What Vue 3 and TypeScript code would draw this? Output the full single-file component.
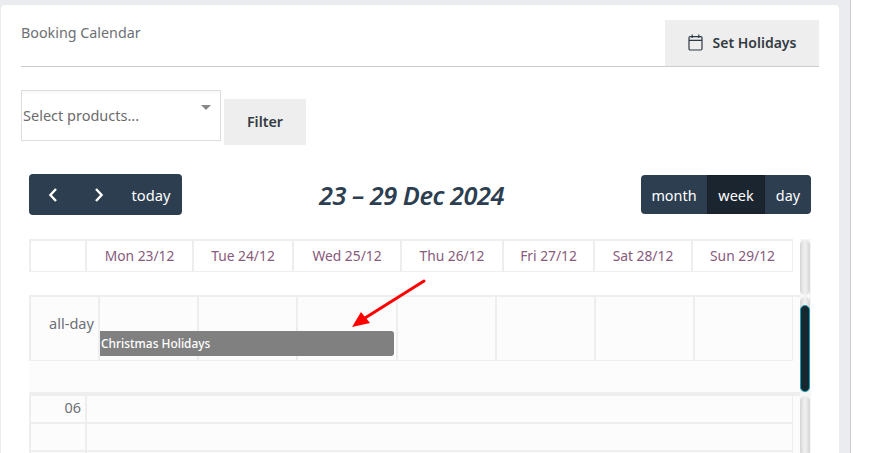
<script setup lang="ts">
const headDays = ['Mon 23/12', 'Tue 24/12', 'Wed 25/12', 'Thu 26/12', 'Fri 27/12', 'Sat 28/12', 'Sun 29/12']
const allDayCells = [1, 2, 3, 4, 5, 6, 7]
const times = ['06', '', '']
</script>

<template>
  <div class="page">
    <div class="shell">
      <main class="card">
        <header class="card-head">
          <h1 class="card-title">Booking Calendar</h1>
          <button class="btn holidays" type="button">
            <svg class="cal-icon" width="15" height="17" viewBox="0 0 15 17" fill="none" stroke="#2f3a44" stroke-width="1.2">
              <rect x="1" y="2.6" width="13" height="13.4" rx="1.2" />
              <path d="M1 6.4h13M4.2 .6v3.4M10.8 .6v3.4" />
            </svg>
            <span>Set Holidays</span>
          </button>
        </header>

        <div class="filter-row">
          <div class="select">
            <span>Select products...</span>
            <i class="caret"></i>
          </div>
          <button class="btn filter" type="button">Filter</button>
        </div>

        <div class="toolbar">
          <div class="group nav">
            <button class="tb prev" type="button" aria-label="previous">
              <svg width="10" height="16" viewBox="0 0 10 16" fill="none" stroke="#fff" stroke-width="2.4"><path d="M8 2 2.4 8 8 14" /></svg>
            </button>
            <button class="tb next" type="button" aria-label="next">
              <svg width="10" height="16" viewBox="0 0 10 16" fill="none" stroke="#fff" stroke-width="2.4"><path d="M2 2l5.6 6L2 14" /></svg>
            </button>
            <button class="tb today" type="button">today</button>
          </div>
          <h2 class="range">23 – 29 Dec 2024</h2>
          <div class="group views">
            <button class="tb month" type="button">month</button>
            <button class="tb week" type="button">week</button>
            <button class="tb day" type="button">day</button>
          </div>
        </div>

        <section class="calendar">
          <div class="pane head-pane">
            <div class="pane-body">
              <div class="head-grid">
                <div class="cell"></div>
                <div v-for="d in headDays" :key="d" class="cell day-name">{{ d }}</div>
              </div>
              <div class="head-pad"></div>
            </div>
            <div class="track"></div>
          </div>

          <div class="pane allday-pane">
            <div class="pane-body tinted">
              <div class="allday-grid">
                <div class="cell axis">all-day</div>
                <div v-for="c in allDayCells" :key="c" class="cell"></div>
                <div class="event">Christmas Holidays</div>
              </div>
              <div class="allday-pad"></div>
            </div>
            <div class="track"><div class="thumb"></div></div>
          </div>

          <div class="pane time-pane">
            <div class="pane-body tinted">
              <div v-for="(t, i) in times" :key="i" class="time-row">
                <div class="cell time-label">{{ t }}</div>
                <div class="cell"></div>
              </div>
            </div>
            <div class="track"></div>
          </div>
        </section>

        <svg class="arrow" width="90" height="60" viewBox="0 0 90 60">
          <path d="M78 6 19 43" stroke="#f00" stroke-width="3" stroke-linecap="round" fill="none" />
          <path d="M6 52 15 37 24 48Z" fill="#f00" />
        </svg>
      </main>
    </div>
  </div>
</template>

<style>
html, body { margin: 0; background: #fff; overflow: hidden; }
</style>

<style scoped>
* { box-sizing: border-box; }
.page {
  width: 883px;
  height: 453px;
  overflow: hidden;
  font-family: "Noto Sans", "Open Sans", sans-serif;
  color: #666;
  background: #fff;
}
.shell {
  width: 851px;
  height: 453px;
  padding: 5px 11px 0 1px;
  background: #ebecf0;
  border-right: 1px solid #c9cacd;
}
.card {
  position: relative;
  width: 838px;
  height: 448px;
  overflow: hidden;
  padding: 15px 20px 0;
  background: #fff;
  border-radius: 4px 4px 0 0;
}
.card-head {
  display: flex;
  justify-content: space-between;
  align-items: flex-start;
  height: 47px;
  border-bottom: 1px solid #ccc;
}
.card-title {
  margin: 4px 0 0;
  font-size: 14.3px;
  font-weight: 400;
  line-height: 18px;
  color: #6c6f73;
}
.btn {
  border: 0;
  background: #eee;
  font-family: inherit;
  font-weight: 600;
  font-size: 14px;
  color: #333b42;
  padding: 0;
}
.holidays {
  display: flex;
  align-items: center;
  justify-content: center;
  gap: 10px;
  width: 154px;
  height: 46px;
  padding-bottom: 2px;
}
.cal-icon { margin-top: 1px; }
.filter-row {
  display: flex;
  align-items: flex-start;
  gap: 3px;
  margin-top: 23px;
}
.select {
  position: relative;
  display: flex;
  align-items: center;
  width: 200px;
  height: 51px;
  padding: 0 1px 2px;
  border: 1px solid #ddd;
  box-shadow: inset 0 5px 3px -3px #f7f7f7;
  font-size: 14.5px;
  color: #6c6c6c;
}
.caret {
  position: absolute;
  top: 14px;
  right: 9px;
  border-left: 5px solid transparent;
  border-right: 5px solid transparent;
  border-top: 5px solid #888;
}
.filter {
  width: 82px;
  height: 46px;
  margin-top: 9px;
  padding-bottom: 2px;
  font-size: 14.3px;
}
.toolbar {
  display: flex;
  align-items: flex-start;
  justify-content: space-between;
  height: 42px;
  margin: 29px 8px 0;
}
.group {
  display: flex;
  background: #2c3e50;
  border-radius: 4px;
  overflow: hidden;
  color: #fff;
}
.nav { width: 153px; height: 41px; }
.views { height: 39px; width: 170px; margin-top: 1px; }
.tb {
  display: flex;
  align-items: center;
  justify-content: center;
  border: 0;
  padding: 0;
  background: transparent;
  color: #fff;
  font-family: inherit;
  font-size: 14.4px;
}
.views .tb { padding-top: 2px; }
.nav .prev { width: 48px; }
.nav .next { width: 43px; }
.nav .today { width: 62px; font-size: 14.7px; }
.month { width: 66px; }
.week { width: 58px; background: #1a252f; box-shadow: inset 0 0 0 1px #18212b; }
.day { width: 46px; }
.range {
  margin: 0;
  font-size: 25.4px;
  line-height: 42px;
  font-weight: 600;
  font-style: italic;
  color: #2c3e50;
  letter-spacing: -0.5px;
}
.calendar {
  margin: 23px 8px 0;
  width: 782px;
}
.pane {
  display: flex;
  background: #f6f6f6;
}
.pane-body { width: 771px; }
.head-pane .pane-body { background: #fff; }
.tinted { background: #fcfcfc; }
.track {
  position: relative;
  width: 10px;
  margin-right: 1px;
  border-radius: 5px;
  background: linear-gradient(90deg, #d4d4d4, #eee 40%, #eee 60%, #d4d4d4);
}
.head-pane .track { margin-top: 1px; margin-bottom: 2px; }
.allday-pane .track { margin-bottom: 3px; }
.thumb {
  position: absolute;
  top: 8px;
  bottom: 1px;
  left: 0;
  right: 0;
  border-radius: 5px;
  background: #17262f;
  border: 1px solid #12a0b4;
}
.head-grid {
  display: grid;
  grid-template-columns: 54px 105px 98px 106px 100px 89px 96px 99px;
  gap: 2px;
  width: 764px;
  height: 33px;
  padding: 2px 1px 1px 2px;
  background: #eee;
}
.head-grid .cell { background: #fff; }
.day-name {
  display: flex;
  align-items: center;
  justify-content: center;
  padding-bottom: 2px;
  font-size: 13.8px;
  color: #875a7b;
}
.head-pad { height: 25px; border-bottom: 2px solid #eee; }
.allday-grid {
  position: relative;
  display: grid;
  grid-template-columns: 67px 97px 97px 98px 97px 97px 97px 97px;
  gap: 2px;
  width: 764px;
  height: 64px;
  padding: 0 1px 1px 2px;
  background: #eee;
}
.allday-grid .cell { background: #fcfcfc; }
.axis {
  display: flex;
  align-items: center;
  justify-content: flex-end;
  padding: 0 4px 12px 0;
  font-size: 14.6px;
  color: #6c7075;
}
.event {
  position: absolute;
  left: 71px;
  top: 34px;
  width: 294px;
  height: 25px;
  padding-left: 1px;
  background: #808080;
  border-radius: 0 3px 3px 0;
  color: #fff;
  font-size: 11.9px;
  font-weight: 500;
  line-height: 25px;
}
.allday-pad { height: 35px; border-bottom: 4px solid #eee; }
.time-pane { height: 60px; }
.time-row {
  display: grid;
  grid-template-columns: 54px 705px;
  gap: 2px;
  width: 764px;
  height: 28px;
  padding: 0 1px 2px 2px;
  background: #eee;
}
.time-row .cell { background: #fcfcfc; }
.time-label {
  display: flex;
  align-items: center;
  justify-content: flex-end;
  padding: 0 4px 3px 0;
  font-size: 14.4px;
  color: #6c7075;
}
.arrow {
  position: absolute;
  left: 345px;
  top: 270px;
}
</style>
